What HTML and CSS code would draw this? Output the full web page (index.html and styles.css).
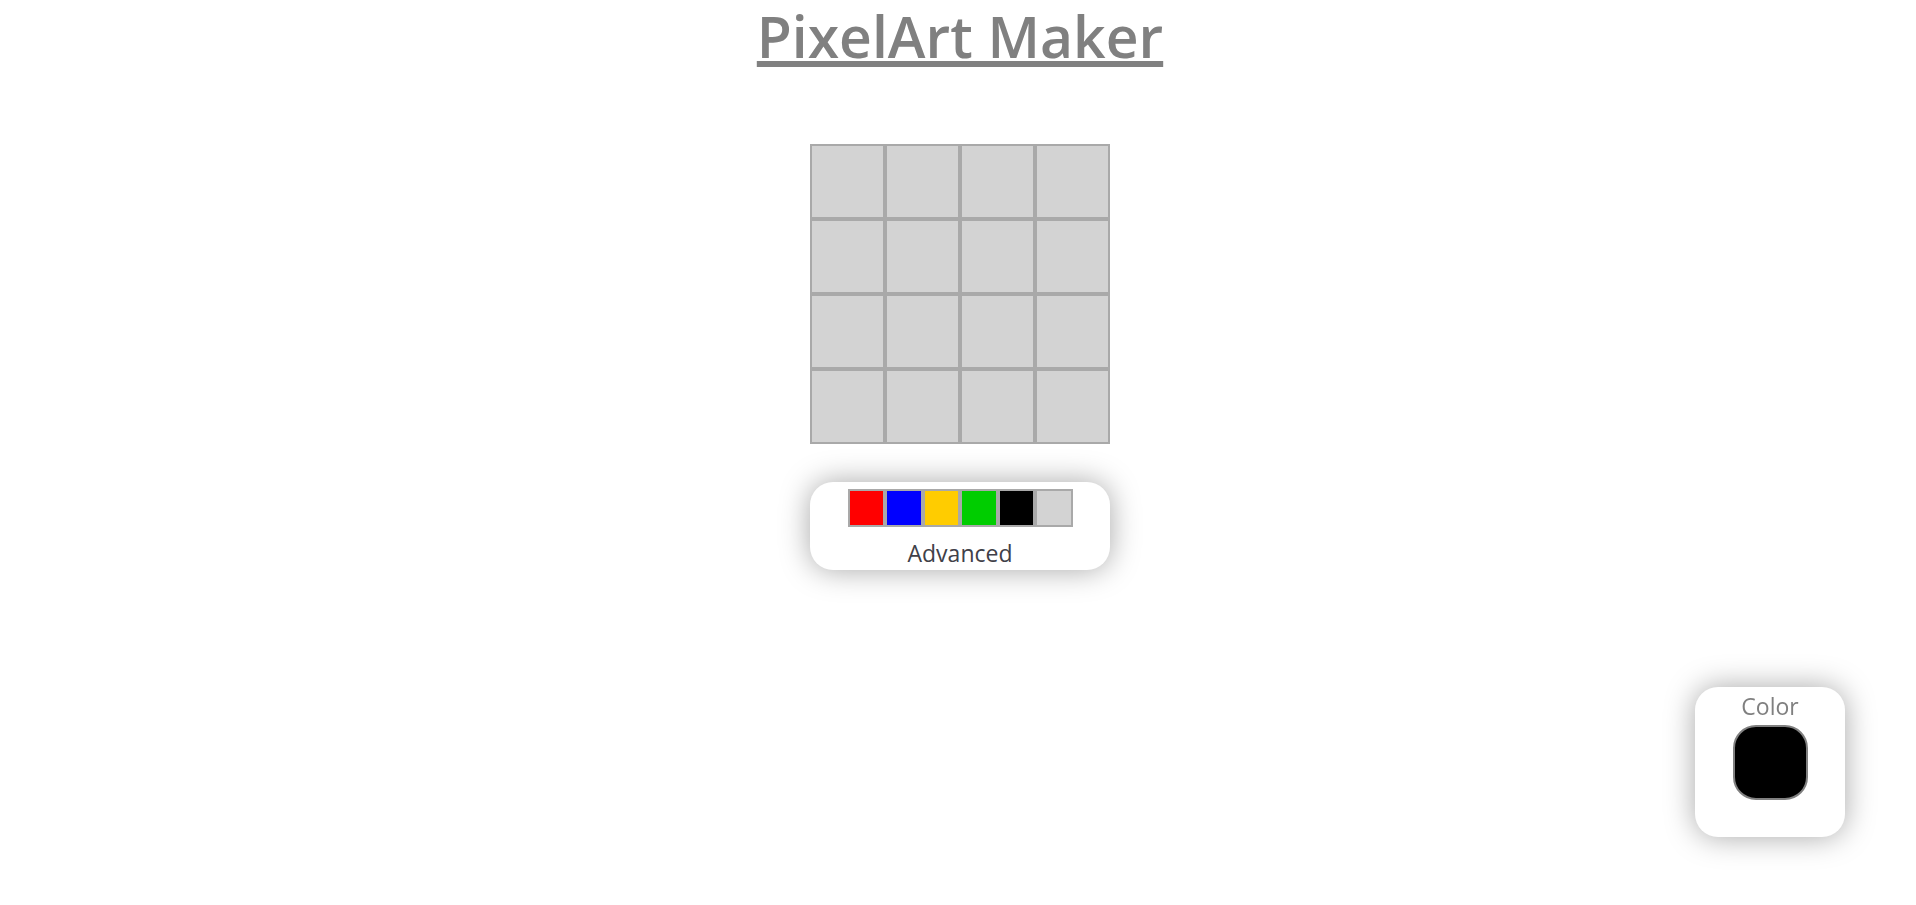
FILE: index.html
```html
<!DOCTYPE html>
<html lang="en">
<head>
<meta charset="utf-8">
<meta name="viewport" content="width=device-width, initial-scale=1">
<title>PixelArt Maker</title>
<link rel="stylesheet" href="styles.css">
</head>
<body>
<main class="page">
  <h1 class="title">PixelArt Maker</h1>
  <div class="canvas">
    <button class="cell" aria-label="Pixel 1"></button>
    <button class="cell" aria-label="Pixel 2"></button>
    <button class="cell" aria-label="Pixel 3"></button>
    <button class="cell" aria-label="Pixel 4"></button>
    <button class="cell" aria-label="Pixel 5"></button>
    <button class="cell" aria-label="Pixel 6"></button>
    <button class="cell" aria-label="Pixel 7"></button>
    <button class="cell" aria-label="Pixel 8"></button>
    <button class="cell" aria-label="Pixel 9"></button>
    <button class="cell" aria-label="Pixel 10"></button>
    <button class="cell" aria-label="Pixel 11"></button>
    <button class="cell" aria-label="Pixel 12"></button>
    <button class="cell" aria-label="Pixel 13"></button>
    <button class="cell" aria-label="Pixel 14"></button>
    <button class="cell" aria-label="Pixel 15"></button>
    <button class="cell" aria-label="Pixel 16"></button>
  </div>
  <section class="tools card">
    <div class="palette">
      <button class="cell red" aria-label="Red"></button>
      <button class="cell blue" aria-label="Blue"></button>
      <button class="cell yellow" aria-label="Yellow"></button>
      <button class="cell green" aria-label="Green"></button>
      <button class="cell black" aria-label="Black"></button>
      <button class="cell" aria-label="Eraser"></button>
    </div>
    <button class="advanced">Advanced</button>
  </section>
</main>
<aside class="current card">
  <span class="label">Color</span>
  <div class="swatch"></div>
</aside>
</body>
</html>
```
FILE: styles.css
```css
* {
  box-sizing: border-box;
}

body {
  margin: 0;
  background: #fff;
  font-family: "Segoe UI", "Open Sans", "Noto Sans", sans-serif;
  font-size: 23px;
  line-height: 30px;
}

.page {
  display: flex;
  flex-direction: column;
  align-items: center;
  min-height: 100vh;
  padding-left: 4px;
}

.title {
  margin: 0 0 72px;
  color: gray;
  font-size: 57px;
  font-weight: 600;
  line-height: 72px;
  text-decoration: underline;
  text-decoration-thickness: 6px;
  text-underline-offset: 3px;
  text-decoration-skip-ink: none;
}

.canvas {
  display: grid;
  grid-template-columns: repeat(4, 75px);
  grid-auto-rows: 75px;
}

.cell {
  padding: 0;
  border: 2px solid darkgray;
  border-radius: 0;
  background: lightgray;
}

.card {
  display: flex;
  flex-direction: column;
  align-items: center;
  border-radius: 23px;
  background: #fff;
  box-shadow: 0 0 30px rgba(0, 0, 0, 0.35);
}

.tools {
  width: 300px;
  margin-top: 38px;
  padding: 7px 0 2px;
}

.palette {
  display: grid;
  grid-template-columns: repeat(6, 1fr);
  width: 225px;
  height: 38px;
}

.red { background: #f00; }
.blue { background: #00f; }
.yellow { background: #fc0; }
.green { background: #00cd00; }
.black { background: #000; }

.advanced {
  margin-top: 11px;
  padding: 0;
  border: 0;
  background: none;
  color: #404048;
  font: inherit;
}

.current {
  position: fixed;
  right: 71px;
  bottom: 68px;
  width: 150px;
  height: 150px;
  padding-top: 4px;
}

.label {
  color: gray;
}

.swatch {
  width: 75px;
  height: 75px;
  margin-top: 4px;
  border: 2px solid gray;
  border-radius: 23px;
  background: #000;
}
```
